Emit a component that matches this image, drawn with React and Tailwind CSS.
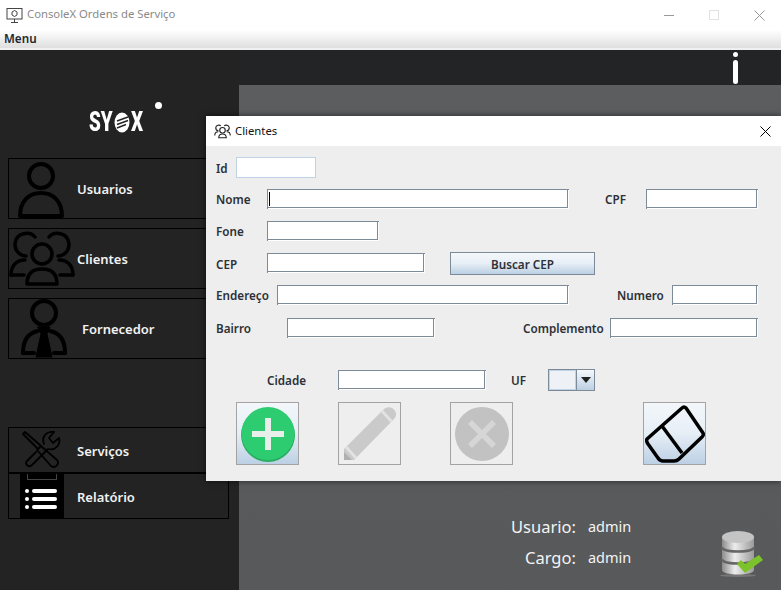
import React from "react";

const font = { sans: "font-['Noto_Sans','Open_Sans',sans-serif]" };

function UserIcon() {
  return (
    <svg width="50" height="60" viewBox="0 0 50 60" fill="none" stroke="#000" strokeWidth="4">
      <circle cx="24" cy="17" r="12" />
      <path d="M3 57 C3 42 12 34 24 34 C36 34 45 42 45 57 Z" strokeLinejoin="round" />
    </svg>
  );
}

function ClientsIcon() {
  return (
    <svg width="66" height="60" viewBox="0 0 66 60" fill="none" stroke="#000" strokeWidth="3.5" strokeLinecap="round">
      <circle cx="33" cy="25" r="10" />
      <path d="M18 55 C18 44 24 40 33 40 C42 40 48 44 48 55 Z" strokeLinejoin="round" />
      <path d="M26 8 C21 2 7 3 6 15 C6 23 12 27 17 27" />
      <path d="M40 8 C45 2 59 3 60 15 C60 23 54 27 49 27" />
      <path d="M2 46 C2 36 8 31 16 31" />
      <path d="M2 46 L15 46" />
      <path d="M64 46 C64 36 58 31 50 31" />
      <path d="M64 46 L51 46" />
    </svg>
  );
}

function SupplierIcon() {
  return (
    <svg width="50" height="60" viewBox="0 0 50 60" fill="none" stroke="#000" strokeWidth="4" strokeLinecap="round">
      <circle cx="25" cy="14" r="12" />
      <path d="M4 54 C4 41 9 34 19 32" />
      <path d="M46 54 C46 41 41 34 31 32" />
      <path d="M4 54 L15 54 M46 54 L35 54" />
      <path d="M19 28 L31 28 L28 35 L33 58 L17 58 L22 35 Z" fill="#000" stroke="#000" strokeWidth="1" />
    </svg>
  );
}

function ToolsIcon() {
  return (
    <svg width="40" height="38" viewBox="0 0 40 38" fill="none" stroke="#000" strokeWidth="1.8" strokeLinecap="round" strokeLinejoin="round">
      <path d="M1 3 L3 1 L18 14 M1 3 L15 17" />
      <path d="M15 19 L19 15 L35 29 C38 33 33 38 29 35 Z" />
      <path d="M22 13 C19 5 25 0 32 1 L27 7 L31 12 L37 7 C39 14 33 20 26 18 L10 34 C7 37 2 33 5 30 L14 21" />
    </svg>
  );
}

function ReportIcon() {
  return (
    <div className="w-[44px] h-[46px] bg-black flex flex-col gap-[4px] items-start justify-center pl-[5px] pt-[6px] relative">
      <div className="absolute top-[1px] left-[7px] w-[30px] h-[6px] border-x border-b border-[#444]" />
      {[0, 1, 2].map((i) => (
        <div key={i} className="flex items-center gap-[3px]">
          <div className="w-[4px] h-[4px] rounded-full bg-white" />
          <div className="w-[25px] h-[4px] rounded-full bg-white" />
        </div>
      ))}
    </div>
  );
}

function SideButton({ icon, label, h = "h-[61px]", iconBox = "w-[69px]", textPad = "pt-[2px]", className = "" }) {
  return (
    <div className={`${h} w-[221px] border border-black flex items-center overflow-hidden ${className}`}>
      <div className={`${iconBox} shrink-0 flex items-center`}>{icon}</div>
      <span className={`text-[13px] font-semibold text-[#f2f2f2] ${textPad} ${font.sans}`}>{label}</span>
    </div>
  );
}

function Label({ children, className = "" }) {
  return <span className={`text-[11.7px] font-semibold text-[#2d3037] whitespace-nowrap pt-[2px] ${font.sans} ${className}`}>{children}</span>;
}

function Field({ className = "", caret = false }) {
  return (
    <div className={`h-[20px] bg-white shadow-[inset_1px_1px_0_#7d8b99,inset_-1px_-1px_0_#fff,inset_-2px_-2px_0_#7d8b99] shrink-0 flex items-center pl-[2px] ${className}`}>
      {caret && <div className="w-px h-[14px] bg-black" />}
    </div>
  );
}

function ToolButton({ children, disabled = false, className = "" }) {
  return (
    <div
      className={`w-[63px] h-[63px] shrink-0 border border-[#a3a3a3] flex items-center justify-center ${
        disabled ? "bg-[#eeeeee]" : "bg-gradient-to-b from-[#f3f7fb] via-[#e6eef6] to-[#bcd0e4]"
      } ${className}`}
    >
      {children}
    </div>
  );
}

export default function App() {
  return (
    <div className="w-[781px] h-[590px] overflow-hidden relative flex flex-col bg-[#232323]">
      {/* window title */}
      <div className="h-[30px] bg-white flex items-center shrink-0">
        <svg className="ml-[6px]" width="17" height="17" viewBox="0 0 17 17" fill="none" stroke="#444" strokeWidth="1">
          <rect x="1" y="1.5" width="15" height="10.5" />
          <path d="M6 5 L8.5 3.5 L11 5 L11 8 L8.5 9.5 L6 8 Z" />
          <path d="M8.5 12 V15 M5 15.5 H12" />
        </svg>
        <span className={`ml-[4px] mb-[2px] text-[11.3px] text-[#8a8a8a] ${font.sans}`}>ConsoleX Ordens de Serviço</span>
        <div className="ml-auto flex items-center">
          <div className="w-[10px] h-px bg-[#999]" />
          <div className="ml-[35px] w-[10px] h-[10px] border border-[#e2e2e2]" />
          <svg className="ml-[35px] mr-[16px]" width="11" height="11" viewBox="0 0 11 11" stroke="#999" strokeWidth="1">
            <path d="M0.5 0.5 L10.5 10.5 M10.5 0.5 L0.5 10.5" />
          </svg>
        </div>
      </div>
      {/* menu */}
      <div className="h-[20px] shrink-0 bg-gradient-to-b from-white to-[#dfdfdf] border-b-2 border-[#f0f0f0] flex items-center pl-[4px]">
        <span className={`text-[11.7px] font-semibold text-[#23282f] ${font.sans}`}>Menu</span>
      </div>

      <div className="flex-1 flex min-h-0">
        {/* sidebar */}
        <div className="w-[239px] shrink-0 pl-[8px] flex flex-col">
          <div className="h-[108px] shrink-0 relative">
            <div className="absolute left-[81px] top-[62px] h-[20px] flex items-center text-white font-black text-[27px] leading-none font-['Roboto',sans-serif]">
              <span className="w-[25px] origin-left scale-x-70">SY</span>
              <svg width="16" height="21" viewBox="0 0 16 21">
                <ellipse cx="8" cy="10.5" rx="7.5" ry="10" fill="#fff" />
                <path d="M3 9 L14 5 M3 12.5 L14 8.5 M3 16 L12 12.5" stroke="#232323" strokeWidth="1.4" />
              </svg>
              <span className="w-[14px] ml-[1px] origin-left scale-x-70">X</span>
            </div>
            <div className="absolute left-[147px] top-[52px] w-[7px] h-[7px] rounded-full bg-white blur-[0.5px]" />
          </div>
          <SideButton icon={<UserIcon />} label="Usuarios" iconBox="w-[68px] pl-[8px]" />
          <SideButton icon={<ClientsIcon />} label="Clientes" iconBox="w-[68px]" className="mt-[9px]" />
          <SideButton icon={<SupplierIcon />} label="Fornecedor" iconBox="w-[73px] pl-[10px]" className="mt-[9px]" />
          <SideButton icon={<ToolsIcon />} label="Serviços" h="h-[46px]" iconBox="w-[68px] pl-[13px]" textPad="pt-[4px]" className="mt-[68px]" />
          <SideButton icon={<ReportIcon />} label="Relatório" h="h-[46px]" iconBox="w-[68px] pl-[11px]" textPad="pt-[4px]" />
        </div>

        {/* right side */}
        <div className="flex-1 flex flex-col min-w-0">
          <div className="h-[35px] shrink-0 bg-[#232425] flex justify-end pr-[42px]">
            <div className="w-[7px] flex flex-col items-center pt-[2px] gap-[3px]">
              <div className="w-[5px] h-[5px] rounded-full bg-white" />
              <div className="w-[5px] h-[24px] rounded-full bg-white" />
            </div>
          </div>
          <div className="flex-1 bg-gradient-to-b from-[#5c5d5f] to-[#58595b] relative">
            <div className="absolute left-[272px] top-[429px] grid grid-cols-[auto_auto] gap-x-[12px] gap-y-[6px] justify-end text-[#f4f4f4]">
              <span className={`text-[16.5px] leading-[25px] text-right ${font.sans}`}>Usuario:</span>
              <span className={`text-[14.5px] leading-[25px] ${font.sans}`}>admin</span>
              <span className={`text-[16.5px] leading-[25px] text-right ${font.sans}`}>Cargo:</span>
              <span className={`text-[14.5px] leading-[25px] ${font.sans}`}>admin</span>
            </div>
            <svg className="absolute left-[480px] top-[444px]" width="46" height="50" viewBox="0 0 46 50">
              <defs>
                <linearGradient id="cyl" x1="0" x2="1" y1="0" y2="0">
                  <stop offset="0" stopColor="#8c8c8c" />
                  <stop offset="0.4" stopColor="#ededed" />
                  <stop offset="1" stopColor="#9a9a9a" />
                </linearGradient>
              </defs>
              <ellipse cx="19" cy="46.5" rx="18" ry="1.5" fill="#777" />
              <path d="M3 8 V41 C3 47 35 47 35 41 V8 Z" fill="url(#cyl)" />
              <path d="M3 18 C3 24 35 24 35 18 M3 30 C3 36 35 36 35 30" stroke="#666" strokeWidth="2.5" fill="none" />
              <ellipse cx="19" cy="8" rx="16" ry="6" fill="#c4c4c4" />
              <path d="M18 35 L22 31 L26 35 L40 26 L44 31 L26 44 Z" fill="#7cc22a" />
            </svg>
          </div>
        </div>
      </div>

      {/* Clientes dialog */}
      <div className="absolute left-[206px] top-[116px] w-[575px] h-[365px] flex flex-col bg-[#eeeeee] shadow-[0_0_6px_rgba(0,0,0,0.6)]">
        <div className="h-[30px] shrink-0 bg-white flex items-center pl-[8px]">
          <svg width="17" height="15" viewBox="0 0 66 60" fill="none" stroke="#222" strokeWidth="4.5">
            <circle cx="33" cy="25" r="11" />
            <path d="M18 55 C18 44 24 40 33 40 C42 40 48 44 48 55 Z" />
            <path d="M26 8 C21 2 7 3 6 15 C6 23 12 27 17 27 M40 8 C45 2 59 3 60 15 C60 23 54 27 49 27 M2 46 C2 36 8 31 16 31 M64 46 C64 36 58 31 50 31" />
          </svg>
          <span className={`ml-[4px] text-[11.3px] text-[#111] ${font.sans}`}>Clientes</span>
          <svg className="ml-auto mr-[10px]" width="11" height="11" viewBox="0 0 11 11" stroke="#000" strokeWidth="1">
            <path d="M0.5 0.5 L10.5 10.5 M10.5 0.5 L0.5 10.5" />
          </svg>
        </div>

        <div className="flex-1 flex flex-col pl-[10px] pt-[11px]">
          <div className="h-[21px] flex items-center">
            <Label className="w-[20px]">Id</Label>
            <div className="w-[80px] h-[21px] bg-white border border-[#c0d3e6]" />
          </div>
          <div className="h-[20px] mt-[11px] flex items-center">
            <Label className="w-[51px]">Nome</Label>
            <Field caret className="w-[302px]" />
            <Label className="ml-[36px] w-[41px]">CPF</Label>
            <Field className="w-[112px]" />
          </div>
          <div className="h-[20px] mt-[12px] flex items-center">
            <Label className="w-[51px]">Fone</Label>
            <Field className="w-[112px]" />
          </div>
          <div className="h-[23px] mt-[11px] flex items-center">
            <Label className="w-[51px]">CEP</Label>
            <Field className="w-[158px] self-start mt-px" />
            <div className="ml-[25px] w-[145px] h-[23px] border border-[#7d8b99] bg-gradient-to-b from-[#f5f8fb] via-[#e6eef6] to-[#bcd0e4] flex items-center justify-center">
              <Label>Buscar CEP</Label>
            </div>
          </div>
          <div className="h-[20px] mt-[10px] flex items-center">
            <Label className="w-[61px]">Endereço</Label>
            <Field className="w-[292px]" />
            <Label className="ml-[48px] w-[55px]">Numero</Label>
            <Field className="w-[86px]" />
          </div>
          <div className="h-[20px] mt-[13px] flex items-center">
            <Label className="w-[71px]">Bairro</Label>
            <Field className="w-[148px]" />
            <Label className="ml-[88px] w-[87px]">Complemento</Label>
            <Field className="w-[148px]" />
          </div>
          <div className="h-[22px] mt-[31px] flex items-center pl-[51px]">
            <Label className="w-[71px]">Cidade</Label>
            <Field className="w-[148px]" />
            <Label className="ml-[25px] w-[37px]">UF</Label>
            <div className="w-[47px] h-[22px] border border-[#7d8b99] flex">
              <div className="w-[27px] bg-[#eef2f7] border border-[#c0d3e6]" />
              <div className="flex-1 border-l border-[#7d8b99] bg-gradient-to-b from-[#f5f8fb] to-[#bcd0e4] flex items-center justify-center">
                <div className="w-0 h-0 border-x-[5px] border-x-transparent border-t-[6px] border-t-[#222]" />
              </div>
            </div>
          </div>
          <div className="mt-[11px] pl-[20px] flex">
            <ToolButton>
              <svg width="56" height="58" viewBox="0 0 56 58">
                <circle cx="28" cy="30" r="27" fill="#27ae60" />
                <circle cx="28" cy="28.5" r="26.5" fill="#2ecc71" />
                <path d="M25 13 H31 V26 H44 V32 H31 V45 H25 V32 H12 V26 H25 Z" fill="#e8eeea" />
              </svg>
            </ToolButton>
            <ToolButton disabled className="ml-[39px]">
              <svg width="56" height="56" viewBox="0 0 56 56">
                <path d="M2 54 L2 43 L42 3 C46 0 51 1 53 5 C55 8 54 11 52 13 L12 54 Z" fill="#cacaca" />
                <path d="M2 54 L2 46 L10 54 Z" fill="#b0b0b0" />
                <path d="M4 41 L14 52 M40 5 L50 16" stroke="#e2e2e2" strokeWidth="3" />
              </svg>
            </ToolButton>
            <ToolButton disabled className="ml-[49px]">
              <svg width="56" height="56" viewBox="0 0 56 56">
                <circle cx="28" cy="28" r="27" fill="#c2c2c2" />
                <path d="M16 16 L40 40 M40 16 L16 40" stroke="#d6d6d6" strokeWidth="5.5" />
              </svg>
            </ToolButton>
            <ToolButton className="ml-[130px]">
              <svg width="60" height="60" viewBox="0 0 60 60" fill="none" stroke="#000" strokeWidth="3.5" strokeLinejoin="round">
                <path d="M2 35 L37 4 Q39 2 41 4 L58 29 Q59 31 57 33 L34 55 Q32 57 29 57 L18 57 Q15 57 13 54 L3 40 Q1 37 2 35 Z" />
                <path d="M17 22 L37 49" />
              </svg>
            </ToolButton>
          </div>
        </div>
      </div>
    </div>
  );
}
